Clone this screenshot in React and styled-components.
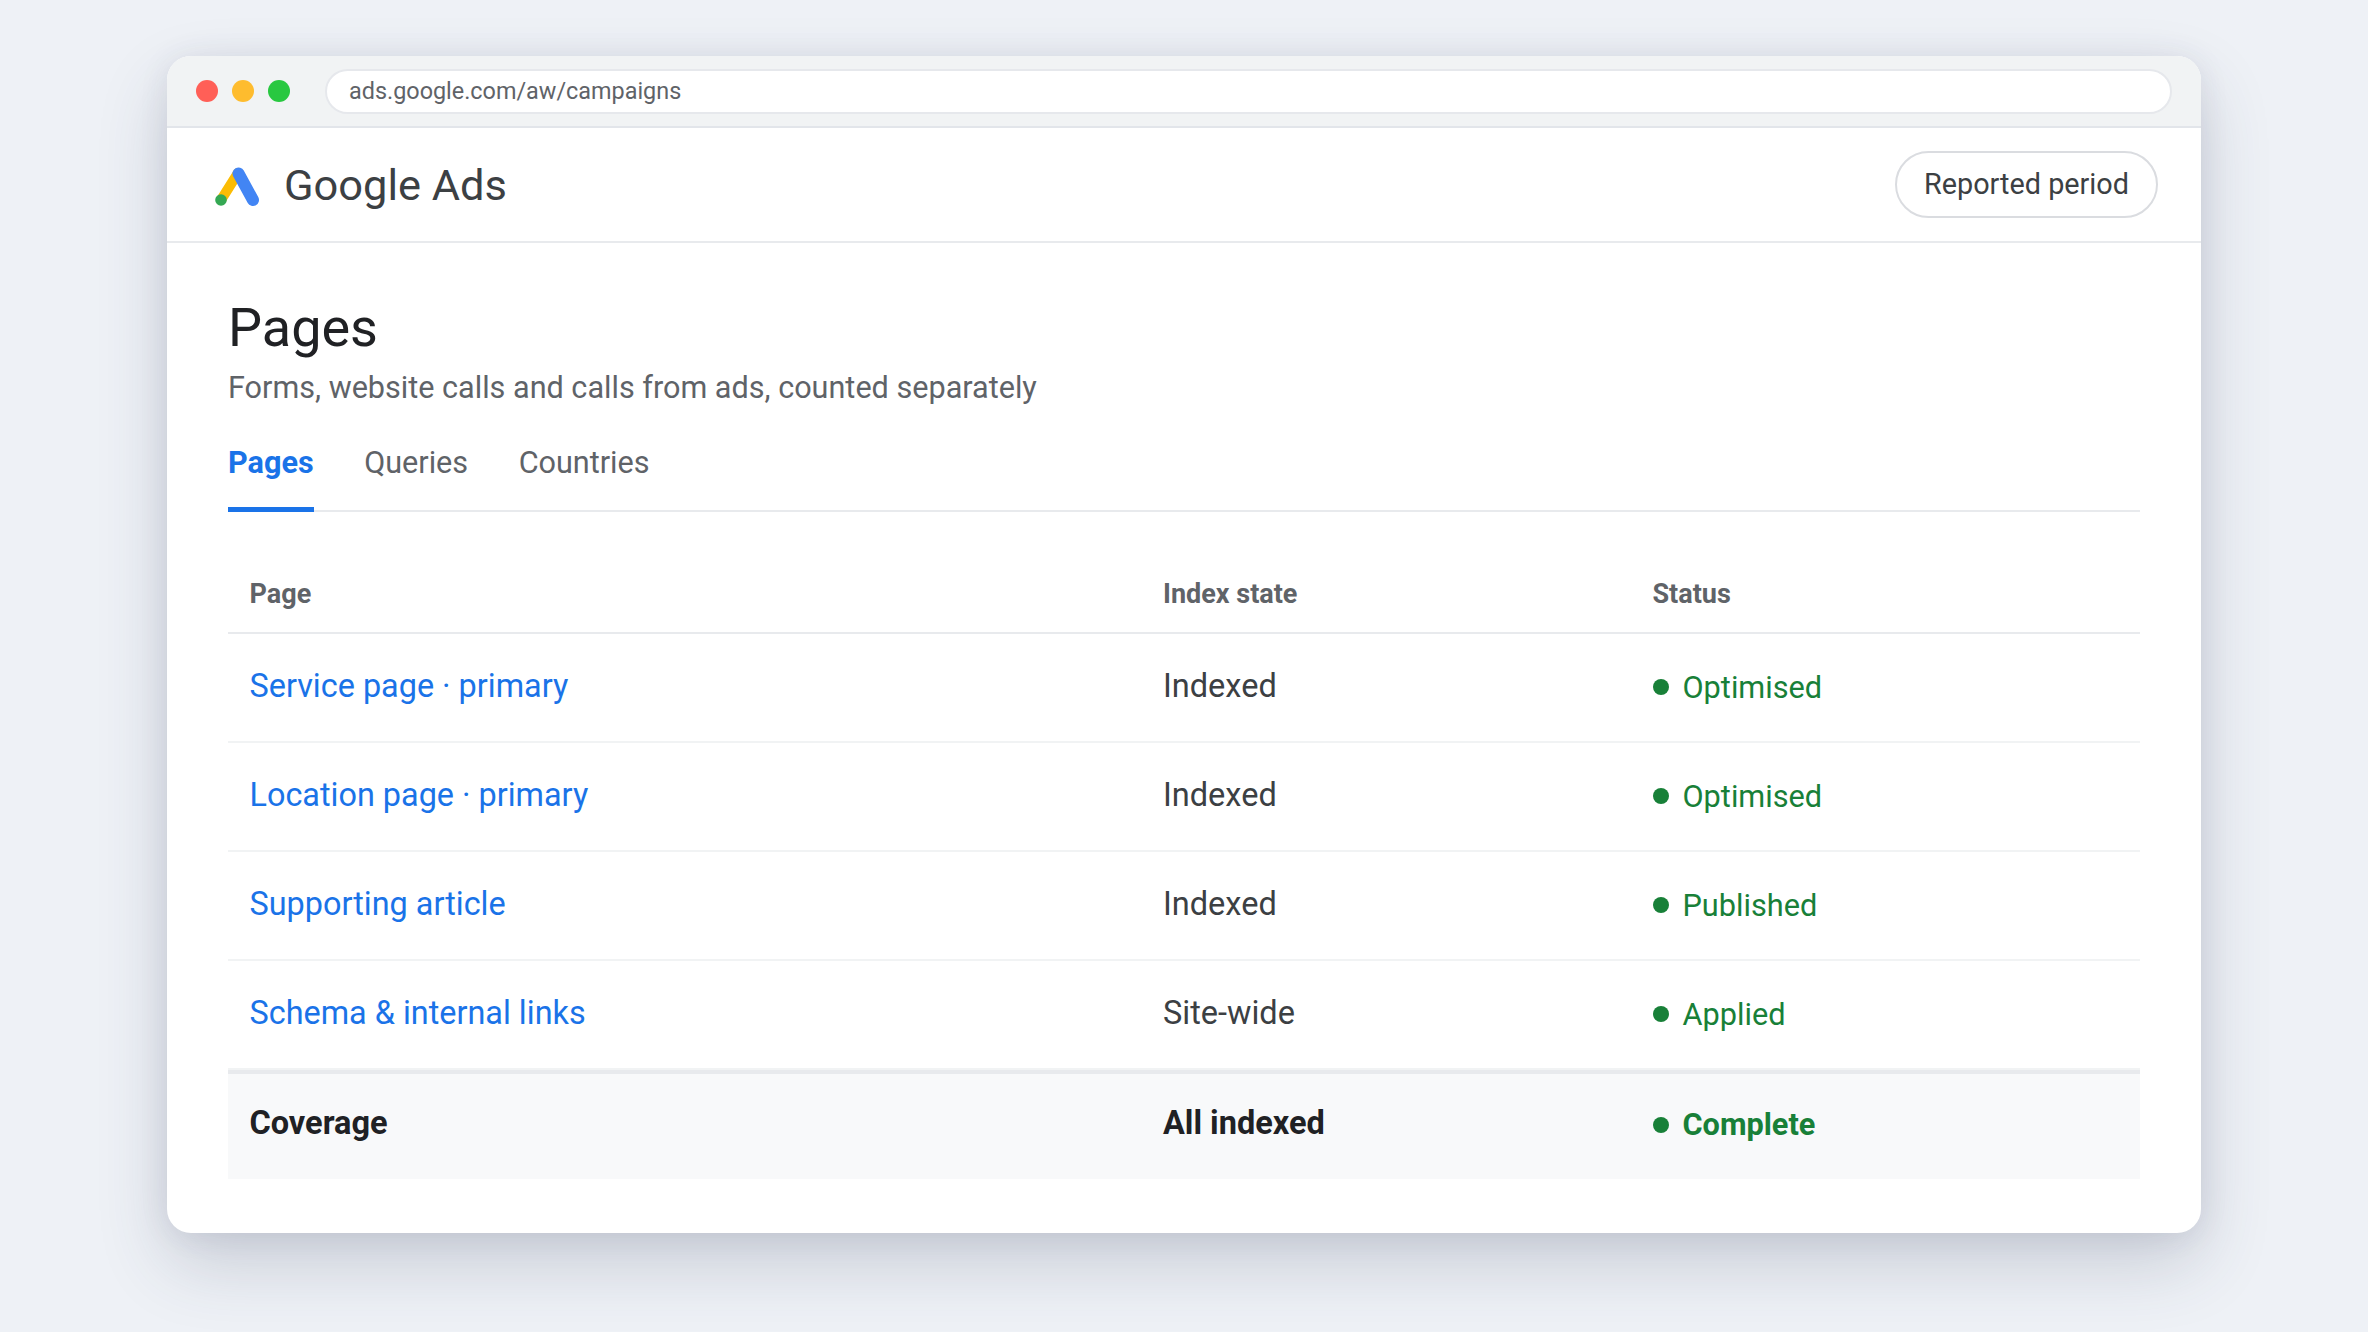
import React from 'react'
import styled, { createGlobalStyle } from 'styled-components'

const Global = createGlobalStyle`
  html, body {
    margin: 0;
    padding: 0;
    background: #eef1f6;
    font-family: Roboto, "Liberation Sans", sans-serif;
  }
`

const Page = styled.div`
  box-sizing: border-box;
  width: 2368px;
  height: 1332px;
  padding: 56px 167px 0;
  background: #eef1f6;
  overflow: hidden;
`

const Window = styled.div`
  height: 1177px;
  background: #fff;
  border-radius: 24px;
  overflow: hidden;
  box-shadow: 0 30px 70px rgba(50, 60, 90, 0.2), 0 2px 30px rgba(50, 60, 90, 0.09);
`

const TitleBar = styled.div`
  box-sizing: border-box;
  height: 72px;
  display: flex;
  align-items: center;
  gap: 35px;
  padding: 0 29px;
  background: #f1f3f4;
  border-bottom: 2px solid #e2e5ea;
`

const Lights = styled.div`
  display: flex;
  gap: 14px;
`

const Light = styled.span`
  width: 22px;
  height: 22px;
  border-radius: 50%;
  background: ${p => p.color};
`

const Address = styled.div`
  box-sizing: border-box;
  flex: 1;
  height: 45px;
  display: flex;
  align-items: center;
  padding: 0 22px;
  background: #fff;
  border: 2px solid #e6e8ec;
  border-radius: 23px;
  font-size: 23.4px;
  color: #5f6368;
`

const Header = styled.div`
  box-sizing: border-box;
  height: 115px;
  display: flex;
  align-items: center;
  justify-content: space-between;
  padding: 0 43px 0 47px;
  border-bottom: 2px solid #e8eaed;
`

const Brand = styled.div`
  display: flex;
  align-items: center;
  gap: 24px;
  padding-top: 1px;
  font-size: 43.4px;
  color: #3c4043;
`

const LogoSvg = styled.svg`
  margin-top: 4px;
`

const PeriodButton = styled.button`
  box-sizing: border-box;
  height: 67px;
  width: 263px;
  padding: 0 0 1px;
  background: #fff;
  border: 2px solid #dadce0;
  border-radius: 34px;
  font-family: inherit;
  font-size: 28.8px;
  color: #3c4043;
`

const Content = styled.div`
  padding: 0 61px;
`

const Title = styled.h1`
  margin: 53px 0 0;
  font-size: 54px;
  line-height: 64px;
  font-weight: 400;
  color: #202124;
`

const Subtitle = styled.p`
  margin: 6px 0 0;
  font-size: 30.6px;
  line-height: 44px;
  color: #5f6368;
`

const Tabs = styled.div`
  display: flex;
  gap: 50.5px;
  margin-top: 35px;
  border-bottom: 2px solid #e8eaed;
`

const Tab = styled.div`
  height: 62px;
  font-size: 30.6px;
  line-height: 36px;
  font-weight: ${p => (p.$active ? 700 : 400)};
  color: ${p => (p.$active ? '#1a73e8' : '#5f6368')};
  border-bottom: 5px solid ${p => (p.$active ? '#1a73e8' : 'transparent')};
  margin-bottom: -2px;
`

const Table = styled.div`
  margin-top: 43px;
`

const Row = styled.div`
  box-sizing: border-box;
  display: grid;
  grid-template-columns: 913.5px 489.5px 1fr;
  align-items: center;
  height: ${p => p.$height || '109px'};
  padding: 0 0 3px 21.5px;
  border-bottom: 2px solid #f1f3f4;
`

const HeadRow = styled(Row)`
  border-bottom-color: #e8eaed;
  padding-bottom: 0;
  font-size: 27px;
  font-weight: 700;
  color: #5f6368;
`

const TotalRow = styled(Row)`
  background: #f8f9fa;
  border-top: 4px solid #e8eaed;
  border-bottom: 0;
  padding-bottom: 8px;
  font-weight: 700;
  font-size: 32.5px;
  color: #202124;
`

const PageLink = styled.a`
  font-size: 32.4px;
  color: #1a73e8;
`

const Cell = styled.div`
  font-size: 32.5px;
  color: #3c4043;
`

const Status = styled.div`
  display: flex;
  align-items: center;
  gap: 14px;
  font-size: 30.7px;
  font-weight: ${p => (p.$bold ? 700 : 400)};
  color: #188038;
  padding-top: ${p => (p.$bold ? 4 : 2)}px;

  &::before {
    content: '';
    width: 16px;
    height: 16px;
    border-radius: 50%;
    background: #188038;
  }
`

const LogoMark = () => (
  <LogoSvg width="46" height="40" viewBox="0 0 46 40" fill="none">
    <path d="M7 33L24 6" stroke="#fbbc04" strokeWidth="10" strokeLinecap="round" />
    <path d="M24.5 6.5L39 33" stroke="#4285f4" strokeWidth="12" strokeLinecap="round" />
    <circle cx="7" cy="33" r="5.8" fill="#34a853" />
  </LogoSvg>
)

const rows = [
  { page: 'Service page · primary', state: 'Indexed', status: 'Optimised' },
  { page: 'Location page · primary', state: 'Indexed', status: 'Optimised' },
  { page: 'Supporting article', state: 'Indexed', status: 'Published' },
  { page: 'Schema & internal links', state: 'Site-wide', status: 'Applied' },
]

export default function App() {
  return (
    <Page>
      <Global />
      <Window>
        <TitleBar>
          <Lights>
            <Light color="#ff5f57" />
            <Light color="#febc2e" />
            <Light color="#28c840" />
          </Lights>
          <Address>ads.google.com/aw/campaigns</Address>
        </TitleBar>
        <Header>
          <Brand>
            <LogoMark />
            Google Ads
          </Brand>
          <PeriodButton>Reported period</PeriodButton>
        </Header>
        <Content>
          <Title>Pages</Title>
          <Subtitle>Forms, website calls and calls from ads, counted separately</Subtitle>
          <Tabs>
            <Tab $active>Pages</Tab>
            <Tab>Queries</Tab>
            <Tab>Countries</Tab>
          </Tabs>
          <Table>
            <HeadRow $height="79px">
              <div>Page</div>
              <div>Index state</div>
              <div>Status</div>
            </HeadRow>
            {rows.map(r => (
              <Row key={r.page}>
                <PageLink>{r.page}</PageLink>
                <Cell>{r.state}</Cell>
                <Status>{r.status}</Status>
              </Row>
            ))}
            <TotalRow $height="109px">
              <div>Coverage</div>
              <div>All indexed</div>
              <Status $bold>Complete</Status>
            </TotalRow>
          </Table>
        </Content>
      </Window>
    </Page>
  )
}
